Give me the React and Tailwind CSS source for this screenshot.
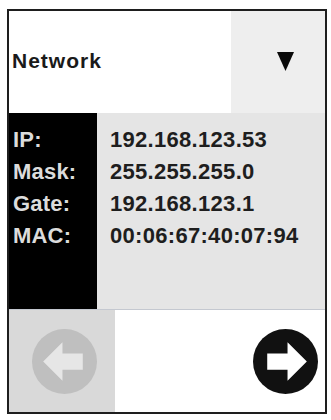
import React from "react";

const rows = [
  ["IP:", "192.168.123.53"],
  ["Mask:", "255.255.255.0"],
  ["Gate:", "192.168.123.1"],
  ["MAC:", "00:06:67:40:07:94"],
];

export default function App() {
  return (
    <div className="w-[331px] h-[420px] bg-white pt-[9px] pl-[7px]" style={{ fontFamily: '"Liberation Sans", Arial, sans-serif' }}>
      <div className="w-[320px] h-[405px] border-2 border-[#1e1e1e] flex flex-col">
        <div className="h-[102px] flex">
          <div className="flex-1 bg-white flex items-center pl-[3px] pb-[2px]">
            <span className="text-[21px] font-bold tracking-[1px] text-[#1a1a1a]">Network</span>
          </div>
          <div className="w-[94px] bg-[#eeeeee] flex items-center pl-[46px] pb-[2px]">
            <svg width="17" height="19" viewBox="0 0 17 19">
              <polygon points="0,0 17,0 8.5,19" fill="#0a0a0a" />
            </svg>
          </div>
        </div>
        <div className="h-[197px] flex border-b border-[#c4c8d0]">
          <div className="w-[88px] bg-black flex flex-col pt-[15px] pl-[4px] gap-[8px]">
            {rows.map(([l]) => (
              <div key={l} className="h-[24px] leading-[24px] text-[22px] font-bold tracking-[0.2px] text-[#dcdcdc]">{l}</div>
            ))}
          </div>
          <div className="flex-1 bg-[#e5e5e5] flex flex-col pt-[15px] pl-[13px] gap-[8px]">
            {rows.map(([l, v]) => (
              <div key={l} className="h-[24px] leading-[24px] text-[22px] font-bold tracking-[0.3px] text-[#1e1e1e]">{v}</div>
            ))}
          </div>
        </div>
        <div className="flex-1 flex">
          <div className="w-[106px] bg-[#d9d9d9] flex items-center justify-center pl-[4px]">
            <svg width="65" height="65" viewBox="0 0 64 64">
              <circle cx="32" cy="32" r="32" fill="#bfbfbf" />
              <polygon points="11,32 30,13 30,24 50,24 50,40 30,40 30,51" fill="#e6e6e6" />
            </svg>
          </div>
          <div className="flex-1 bg-white flex items-center justify-end pr-[7px]">
            <svg width="65" height="65" viewBox="0 0 64 64">
              <circle cx="32" cy="32" r="32" fill="#111111" />
              <polygon points="53,32 34,13 34,24 14,24 14,40 34,40 34,51" fill="#ffffff" />
            </svg>
          </div>
        </div>
      </div>
    </div>
  );
}
